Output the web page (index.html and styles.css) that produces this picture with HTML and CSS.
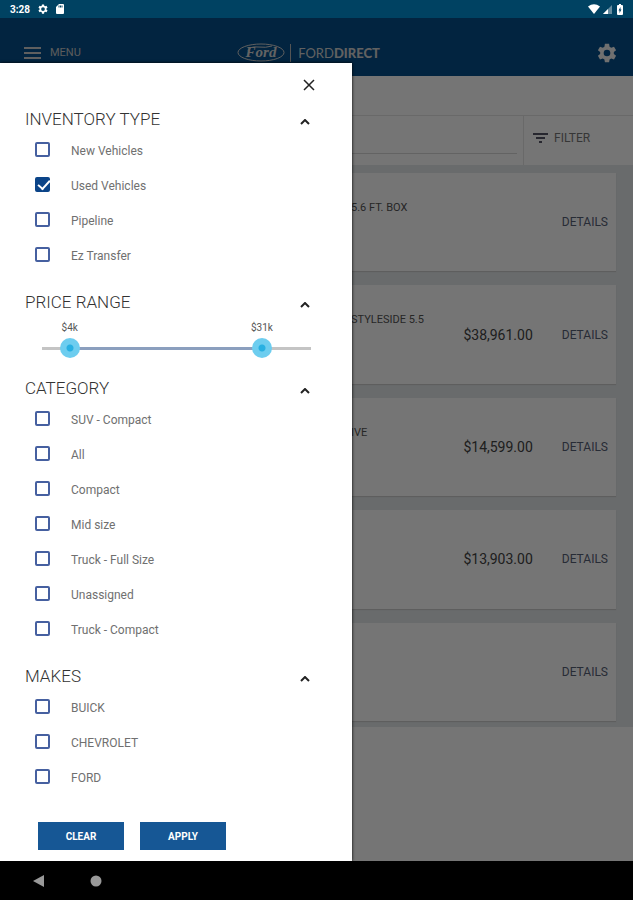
FILE: index.html
```html
<!DOCTYPE html>
<html lang="en">
<head>
  <meta charset="UTF-8">
  <meta name="viewport" content="width=device-width, initial-scale=1">
  <title>FordDirect Inventory</title>
  <link rel="stylesheet" href="styles.css">
</head>
<body>

  <!-- Status bar -->
  <div class="status-bar">
    <span class="time">3:28</span>
    <svg width="10" height="10" viewBox="0 0 24 24"><path class="gear" fill-rule="evenodd" d="M9.500 1h5l.6 3.400 2 1.200 3.300-1.200 2.500 4.300-2.700 2.200v2.300l2.700 2.200-2.500 4.300-3.300-1.200-2 1.200-.6 3.400h-5l-.6-3.400-2-1.200-3.300 1.200-2.500-4.300 2.700-2.200v-2.300L1.100 8.700l2.500-4.300 3.300 1.200 2-1.200zM12 7.500a4.500 4.500 0 1 0 0 9 4.500 4.500 0 0 0 0-9z"/></svg>
    <svg width="8" height="10" viewBox="0 0 8 10"><path d="M3 0h4a1 1 0 0 1 1 1v8a1 1 0 0 1-1 1H1a1 1 0 0 1-1-1V3z"/><path class="slots" d="M3 1.500v2M4.500 1.500v2M6 1.500v2"/></svg>
    <div class="signals">
      <svg width="12" height="10" viewBox="0 0 12 10"><path d="M0 2.500Q6-2 12 2.500L6 10z"/></svg>
      <svg width="9" height="9" viewBox="0 0 9 9"><path opacity=".4" d="M9 0v9H0z"/><path d="M5 4v5H0z"/></svg>
      <svg width="6" height="11" viewBox="0 0 6 11"><path fill-rule="evenodd" d="M2 0h2v1h1a1 1 0 0 1 1 1v8a1 1 0 0 1-1 1H1a1 1 0 0 1-1-1V2a1 1 0 0 1 1-1h1zM3.500 3L1.500 6.500h1V9l2-3.500h-1z"/></svg>
    </div>
  </div>

  <main class="app">
    <header class="app-header">
      <button class="menu-btn" type="button">
        <svg width="17" height="12" viewBox="0 0 17 12"><path d="M0 1h17M0 6h17M0 11h17"/></svg>
        MENU
      </button>
      <div class="logo">
        <svg width="48" height="19" viewBox="0 0 48 19">
          <ellipse cx="24" cy="9.500" rx="23" ry="8.500"/>
          <text x="24" y="14" text-anchor="middle">Ford</text>
          <path d="M11 8Q13 3 21 4T35 3"/>
        </svg>
        <span class="wordmark">FORD<b>DIRECT</b></span>
      </div>
      <button class="settings-btn" type="button" aria-label="Settings">
        <svg width="20" height="20" viewBox="0 0 24 24"><path fill-rule="evenodd" d="M9.500 1h5l.6 3.400 2 1.200 3.300-1.200 2.500 4.300-2.700 2.200v2.300l2.700 2.200-2.500 4.300-3.300-1.200-2 1.200-.6 3.400h-5l-.6-3.400-2-1.200-3.300 1.200-2.500-4.300 2.700-2.200v-2.300L1.100 8.700l2.500-4.300 3.300 1.200 2-1.200zM12 8a4 4 0 1 0 0 8 4 4 0 0 0 0-8z"/></svg>
      </button>
    </header>

    <div class="title-bar"></div>

    <div class="search-bar">
      <input class="search" type="search" aria-label="Search inventory">
      <button class="filter-btn" type="button">
        <svg width="15" height="10" viewBox="0 0 15 10"><path d="M0 1h15M3 5h9M6 9h3"/></svg>
        FILTER
      </button>
    </div>

    <!-- Vehicle list -->
    <div class="vehicles">
      <article class="vehicle">
        <h3>5.6 FT. BOX</h3>
        <a href="#">DETAILS</a>
      </article>
      <article class="vehicle">
        <h3>STYLESIDE 5.5</h3>
        <span class="price">$38,961.00</span>
        <a href="#">DETAILS</a>
      </article>
      <article class="vehicle">
        <h3>IVE</h3>
        <span class="price">$14,599.00</span>
        <a href="#">DETAILS</a>
      </article>
      <article class="vehicle">
        <span class="price">$13,903.00</span>
        <a href="#">DETAILS</a>
      </article>
      <article class="vehicle">
        <a href="#">DETAILS</a>
      </article>
    </div>

    <div class="scrim"></div>

    <!-- Filter drawer -->
    <form class="drawer">
      <div class="drawer-top">
        <button class="icon-btn" type="button" aria-label="Close">
          <svg width="12" height="12" viewBox="0 0 12 12"><path d="M1 1l10 10M11 1L1 11"/></svg>
        </button>
      </div>

      <section class="group">
        <div class="group-head">
          <h2>INVENTORY TYPE</h2>
          <button class="icon-btn chevron" type="button" aria-label="Collapse inventory type"><svg width="10" height="6" viewBox="0 0 10 6"><path d="M1 5l4-4 4 4"/></svg></button>
        </div>
        <label class="option"><input type="checkbox"><span>New Vehicles</span></label>
        <label class="option"><input type="checkbox" checked><span>Used Vehicles</span></label>
        <label class="option"><input type="checkbox"><span>Pipeline</span></label>
        <label class="option"><input type="checkbox"><span>Ez Transfer</span></label>
      </section>

      <section class="group">
        <div class="group-head">
          <h2>PRICE RANGE</h2>
          <button class="icon-btn chevron" type="button" aria-label="Collapse price range"><svg width="10" height="6" viewBox="0 0 10 6"><path d="M1 5l4-4 4 4"/></svg></button>
        </div>
        <div class="range" style="--low: 0.071; --high: 0.843">
          <output class="low" for="price-low">$4k</output>
          <output class="high" for="price-high">$31k</output>
          <input id="price-low" type="range" min="1500" max="36500" step="500" value="4000" aria-label="Lowest price">
          <input id="price-high" type="range" min="1500" max="36500" step="500" value="31000" aria-label="Highest price">
        </div>
      </section>

      <section class="group">
        <div class="group-head">
          <h2>CATEGORY</h2>
          <button class="icon-btn chevron" type="button" aria-label="Collapse category"><svg width="10" height="6" viewBox="0 0 10 6"><path d="M1 5l4-4 4 4"/></svg></button>
        </div>
        <label class="option"><input type="checkbox"><span>SUV - Compact</span></label>
        <label class="option"><input type="checkbox"><span>All</span></label>
        <label class="option"><input type="checkbox"><span>Compact</span></label>
        <label class="option"><input type="checkbox"><span>Mid size</span></label>
        <label class="option"><input type="checkbox"><span>Truck - Full Size</span></label>
        <label class="option"><input type="checkbox"><span>Unassigned</span></label>
        <label class="option"><input type="checkbox"><span>Truck - Compact</span></label>
      </section>

      <section class="group">
        <div class="group-head">
          <h2>MAKES</h2>
          <button class="icon-btn chevron" type="button" aria-label="Collapse makes"><svg width="10" height="6" viewBox="0 0 10 6"><path d="M1 5l4-4 4 4"/></svg></button>
        </div>
        <label class="option"><input type="checkbox"><span>BUICK</span></label>
        <label class="option"><input type="checkbox"><span>CHEVROLET</span></label>
        <label class="option"><input type="checkbox"><span>FORD</span></label>
      </section>

      <div class="actions">
        <button type="reset">CLEAR</button>
        <button type="submit">APPLY</button>
      </div>
    </form>
  </main>

  <!-- Device navigation -->
  <nav class="nav-bar">
    <button type="button" aria-label="Back"><svg width="12" height="12" viewBox="0 0 12 12"><path d="M11 0v12L0 6z"/></svg></button>
    <button type="button" aria-label="Home"><svg width="12" height="12" viewBox="0 0 12 12"><circle cx="6" cy="6" r="5.500"/></svg></button>
  </nav>

</body>
</html>
```
FILE: styles.css
```css
* {
  box-sizing: border-box;
}

body {
  margin: 0;
  min-height: 100vh;
  display: flex;
  flex-direction: column;
  background: #000;
  font-family: Roboto, "Liberation Sans", sans-serif;
}

button {
  padding: 0;
  border: none;
  background: none;
  font-family: inherit;
  cursor: pointer;
}

h2, h3 {
  margin: 0;
  font-weight: 400;
}

svg {
  display: block;
}

/* Status bar */
.status-bar {
  display: flex;
  align-items: center;
  gap: 8px;
  height: 18px;
  padding: 0 10px;
  background: #004262;
  color: #fff;
  fill: #fff;
}

.time {
  font-size: 10px;
  font-weight: 700;
}

.slots {
  stroke: #004262;
  stroke-width: 1;
}

.signals {
  display: flex;
  align-items: center;
  gap: 3px;
  margin-left: auto;
}

.signals svg:last-child {
  margin-left: 2px;
}

/* App page */
.app {
  position: relative;
  flex: 1;
  display: grid;
  grid-template-rows: 58px 40px 49px 1fr 134px;
  background: #fff;
}

.app-header {
  display: grid;
  grid-template-columns: 1fr auto 1fr;
  align-items: center;
  padding: 11px 16px 0 0;
  background: #06508c;
  color: #fff;
}

.menu-btn {
  display: flex;
  align-items: center;
  gap: 9px;
  padding-left: 24px;
  color: #c8c8c8;
  font-size: 11px;
}

.menu-btn svg {
  stroke: #d0d0d0;
  stroke-width: 2;
}

.logo {
  display: flex;
  align-items: center;
}

.logo svg {
  fill: none;
  stroke: #d0d0d0;
}

.logo text {
  fill: #d8d8d8;
  stroke: none;
  font: italic 700 15px "Liberation Serif", serif;
}

.wordmark {
  margin-left: 5px;
  padding-left: 7px;
  border-left: 1px solid #b8b8b8;
  color: #d4d4d4;
  font-family: Lato, sans-serif;
  font-size: 13px;
  line-height: 18px;
}

.wordmark b {
  font-weight: 900;
}

.settings-btn {
  justify-self: end;
}

.settings-btn svg {
  fill: #f4f4f4;
}

.title-bar {
  border-bottom: 1px solid #e4e4e4;
}

.search-bar {
  display: flex;
}

.search {
  flex: 1;
  min-width: 0;
  margin: 0 6px 11px 17px;
  border: none;
  border-bottom: 1px solid #d8d8d8;
  background: none;
}

.filter-btn {
  display: flex;
  align-items: center;
  gap: 6px;
  width: 110px;
  padding: 0 0 5px 9px;
  border-left: 1px solid #e4e4e4;
  color: #777;
  font-size: 12px;
}

.filter-btn svg {
  stroke: #556;
  stroke-width: 2;
}

/* Vehicle list */
.vehicles {
  display: grid;
  grid-auto-rows: 1fr;
  gap: 14px;
  padding: 8px 17px 6px;
  background: #e5e9eb;
}

.vehicle {
  display: flex;
  align-items: center;
  padding: 0 8px 0 334px;
  background: #fff;
  box-shadow: 0 1px 1px #ccc;
}

.vehicle h3 {
  align-self: flex-start;
  padding-top: 28px;
  color: #555;
  font-size: 11px;
  white-space: nowrap;
}

.price {
  margin-left: auto;
  color: #444;
  font-size: 14px;
}

.vehicle a {
  margin-left: auto;
  color: #566076;
  font-size: 12px;
  text-decoration: none;
}

.price + a {
  margin-left: 29px;
}

.scrim {
  position: absolute;
  inset: 0;
  background: rgba(0, 0, 0, 0.54);
}

/* Filter drawer */
.drawer {
  position: absolute;
  top: 45px;
  bottom: 0;
  left: 0;
  width: 352px;
  background: #fff;
  box-shadow: 0 0 3px #000;
}

.drawer-top {
  display: flex;
  justify-content: flex-end;
  height: 42px;
  padding: 2px 37px 0 0;
}

.icon-btn svg {
  fill: none;
  stroke: #222;
  stroke-width: 1.500;
}

.group {
  margin-bottom: 15px;
}

.group-head {
  display: flex;
  align-items: center;
  justify-content: space-between;
  height: 28px;
  padding: 0 42px 0 25px;
}

.group-head h2 {
  color: #333;
  font-size: 17px;
  font-weight: 300;
}

.chevron {
  padding-top: 6px;
}

.chevron svg {
  stroke-width: 2;
}

.option {
  display: flex;
  align-items: center;
  gap: 21px;
  height: 35px;
  padding-left: 35px;
  color: #707070;
  font-size: 12px;
}

.option input {
  appearance: none;
  width: 15px;
  height: 15px;
  margin: 0 0 2px;
  border: 2px solid #4660a0;
  border-radius: 2px;
}

.option input:checked {
  border-color: #0b4488;
  background: #0b4488;
}

.option input:checked::before {
  content: "";
  display: block;
  width: 10px;
  height: 5px;
  margin: 2px 0 0 1px;
  border: solid #fff;
  border-width: 0 0 2px 2px;
  transform: translateY(-1px) rotate(-48deg);
}

/* Price slider */
.range {
  position: relative;
  display: grid;
  height: 43px;
  margin: 0 41px 0 42px;
  padding-top: 22px;
  color: #555;
  font-size: 10px;
}

.range::before,
.range::after {
  content: "";
  grid-area: 1 / 1;
  height: 3px;
  margin-top: 9px;
  background: #c4c4c4;
}

.range::after {
  margin-left: calc(10px + (100% - 20px) * var(--low));
  margin-right: calc(10px + (100% - 20px) * (1 - var(--high)));
  background: #8b9fbe;
}

.range output {
  position: absolute;
  top: 6px;
  left: calc(10px + (100% - 20px) * var(--low));
  transform: translateX(-50%);
}

.range .high {
  left: calc(10px + (100% - 20px) * var(--high));
}

.range input {
  grid-area: 1 / 1;
  z-index: 1;
  appearance: none;
  width: 100%;
  height: 20px;
  margin: 0;
  background: none;
  pointer-events: none;
}

.range input::-webkit-slider-thumb {
  appearance: none;
  width: 20px;
  height: 20px;
  border-radius: 50%;
  background: radial-gradient(circle, #28b0e2 3px, #6dcdef 4px);
  pointer-events: auto;
}

/* Buttons */
.actions {
  display: flex;
  gap: 16px;
  padding: 12px 0 11px 38px;
}

.actions button {
  width: 86px;
  height: 28px;
  background: #165795;
  color: #fff;
  font-size: 10px;
  font-weight: 700;
}

/* Device navigation */
.nav-bar {
  display: flex;
  align-items: center;
  gap: 45px;
  height: 39px;
  padding-left: 33px;
  background: #000;
}

.nav-bar svg {
  fill: #999;
}
```
